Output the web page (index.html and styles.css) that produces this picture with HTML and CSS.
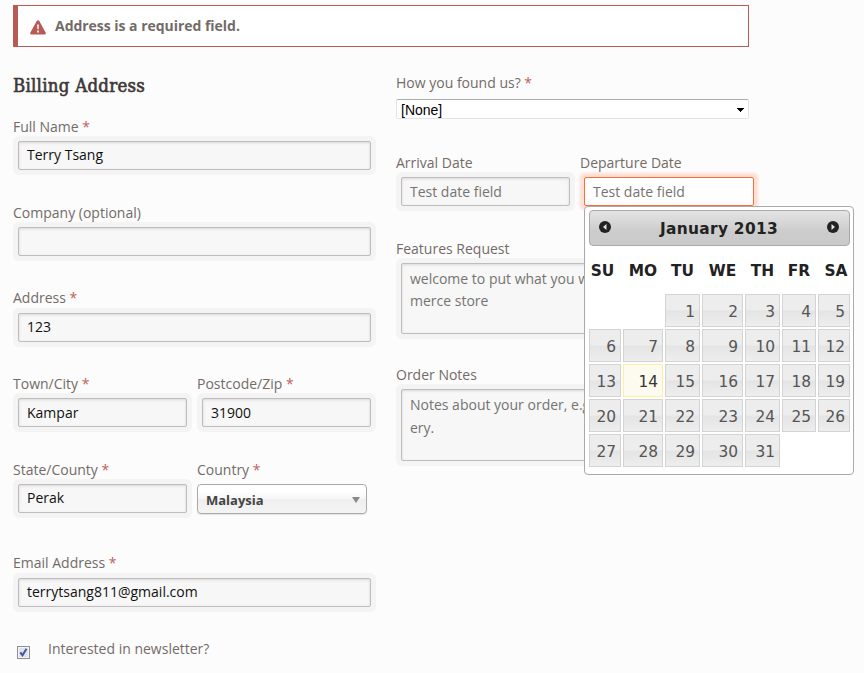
FILE: index.html
```html
<!DOCTYPE html>
<html lang="en">
<head>
<meta charset="utf-8">
<title>Billing Address</title>
<link rel="stylesheet" href="styles.css">
</head>
<body>
<main class="checkout">
  <div class="alert">
    <svg class="alert-icon" width="16" height="15" viewBox="0 0 16 15"><path d="M8 0.3c.6 0 1 .3 1.3.8l6.3 11.3c.6 1.2 0 2.2-1.2 2.2H1.6C.4 14.600-.2 13.600.4 12.400L6.700 1.100C7 .6 7.400.3 8 .3z" fill="#b85b55"/><path d="M7 4.500h2l-.3 4.800H7.300zM7 10.600h2v2H7z" fill="#f4e4e2"/></svg>
    <strong>Address is a required field.</strong>
  </div>
  <div class="columns">
    <form class="billing">
      <h3><span class="heading">Billing Address</span></h3>
      <div class="row"><label>Full Name <b>*</b></label><div class="field">Terry Tsang</div></div>
      <div class="row"><label>Company (optional)</label><div class="field"></div></div>
      <div class="row raised"><label>Address <b>*</b></label><div class="field">123</div></div>
      <div class="pair towns">
        <div class="row"><label>Town/City <b>*</b></label><div class="field">Kampar</div></div>
        <div class="row"><label>Postcode/Zip <b>*</b></label><div class="field">31900</div></div>
      </div>
      <div class="pair last">
        <div class="row"><label>State/County <b>*</b></label><div class="field">Perak</div></div>
        <div class="row"><label>Country <b>*</b></label><div class="chosen"><span>Malaysia</span><i></i></div></div>
      </div>
      <div class="row raised"><label>Email Address <b>*</b></label><div class="field">terrytsang811@gmail.com</div></div>
      <div class="check">
        <span class="box"><svg width="9" height="9" viewBox="0 0 9 9"><path d="M1.300 4.300L3.500 7.300 7.500.8" fill="none" stroke="#4057a0" stroke-width="2"/></svg></span>
        <label>Interested in newsletter?</label>
      </div>
    </form>
    <form class="extra">
      <label>How you found us? <b>*</b></label>
      <div class="select"><span>[None]</span><svg width="7" height="4" viewBox="0 0 7 4" shape-rendering="crispEdges"><path d="M0 0h7v1H6v1H5v1H4v1H3V3H2V2H1V1H0z"/></svg></div>
      <div class="pair dates">
        <div class="row"><label>Arrival Date</label><div class="field hint">Test date field</div></div>
        <div class="row depart"><label>Departure Date</label><div class="field hint focus">Test date field</div>
          <div class="picker">
            <div class="picker-head">
              <svg width="12" height="12" viewBox="0 0 12 12"><circle cx="6" cy="6" r="6" fill="#222"/><path d="M7.500 3v6L4 6z" fill="#e4e4e4"/></svg>
              <span>January 2013</span>
              <svg width="12" height="12" viewBox="0 0 12 12"><circle cx="6" cy="6" r="6" fill="#222"/><path d="M4.500 3v6L8 6z" fill="#e4e4e4"/></svg>
            </div>
            <div class="days names"><span>SU</span><span>MO</span><span>TU</span><span>WE</span><span>TH</span><span>FR</span><span>SA</span></div>
            <div class="days">
              <i></i><i></i><a>1</a><a>2</a><a>3</a><a>4</a><a>5</a>
              <a>6</a><a>7</a><a>8</a><a>9</a><a>10</a><a>11</a><a>12</a>
              <a>13</a><a class="today">14</a><a>15</a><a>16</a><a>17</a><a>18</a><a>19</a>
              <a>20</a><a>21</a><a>22</a><a>23</a><a>24</a><a>25</a><a>26</a>
              <a>27</a><a>28</a><a>29</a><a>30</a><a>31</a>
            </div>
          </div>
        </div>
      </div>
      <div class="note"><label>Features Request</label><div class="field area hint">welcome to put what you w<br>merce store</div></div>
      <div class="note order"><label>Order Notes</label><div class="field area hint">Notes about your order, e.g<br>ery.</div></div>
    </form>
  </div>
</main>
</body>
</html>
```
FILE: styles.css
```css
* { box-sizing: border-box; }
body {
  margin: 0;
  height: 673px;
  overflow: hidden;
  background: #fcfcfc;
  color: #736b68;
  font: 14px/22px "Open Sans", sans-serif;
}
.checkout { width: 736px; margin: 5px 0 0 13px; }
.alert {
  display: flex;
  align-items: center;
  gap: 9px;
  height: 42px;
  padding-left: 12px;
  border: 1px solid #b85b55;
  border-left-width: 5px;
  background: #fff;
}
.alert strong { letter-spacing: -0.03px; }
.alert-icon { margin-top: 2px; }
.columns { display: flex; gap: 21px; }
.billing { width: 362px; padding-top: 26px; }
h3 {
  margin: 0 0 17px;
  height: 26px;
  color: #3c3735;
  font: 400 18.5px/26px "DejaVu Serif Condensed", "DejaVu Serif", serif;
  font-stretch: condensed;
  white-space: nowrap;
}
.heading { letter-spacing: 0.25px; -webkit-text-stroke: 0.6px #3c3735; }
label { display: block; height: 22px; white-space: nowrap; }
label b { color: #c0605a; font-weight: 400; }
.row { height: 85.75px; }
.field {
  height: 29px;
  margin: 3px 4px 0 5px;
  padding: 0 8px;
  border: 1px solid #c0bbbc;
  border-radius: 2px;
  background: #f7f7f7;
  box-shadow: 0 0 0 5px #f4f4f4, inset 0 1px 3px rgba(0, 0, 0, .12);
  color: #111;
  line-height: 26px;
  white-space: nowrap;
}
.raised { display: flow-root; }
.raised label { margin-top: -1px; }
.raised .field { margin-top: 4px; }
.hint { color: #757371; }
.pair { display: grid; grid-template-columns: 178px 178px; gap: 6px; }
.towns .field, .dates .field { line-height: 28px; }
.last { height: 94px; }
.chosen {
  display: flex;
  align-items: center;
  justify-content: space-between;
  width: 170px;
  height: 30px;
  margin-top: 3px;
  padding: 2px 6px 0 8px;
  border: 1px solid #aaa;
  border-radius: 4px;
  background: linear-gradient(#fff 20%, #f6f6f6 50%, #eee 52%, #f4f4f4);
  box-shadow: 0 1px 1px rgba(0, 0, 0, .1);
  color: #444;
  font-size: 13px;
  font-weight: 700;
}
.chosen i { border: 4px solid transparent; border-top: 6px solid #888; border-bottom: 0; }
.check { display: flex; gap: 18px; padding-left: 4px; margin-top: -1px; }
.box {
  display: grid;
  place-items: center;
  width: 13px;
  height: 13px;
  margin-top: 8px;
  border: 1px solid #8e8f8f;
  background: #dfe3ea;
  box-shadow: inset 0 0 0 1px #f4f4f4;
}
.extra { width: 358px; flex: none; padding-top: 25px; }
.select {
  display: flex;
  align-items: center;
  justify-content: space-between;
  width: 353px;
  height: 20px;
  margin-top: 5px;
  padding: 1px 4px 0;
  border: 1px solid #e2e3ea;
  border-top-color: #abadb3;
  border-radius: 2px;
  background: #fff;
  color: #000;
  font: 14px/18px "Liberation Sans", sans-serif;
}
.dates { margin-top: 33px; grid-template-columns: 178px 179px; }
.dates .field { margin-right: 4px; }
.depart { position: relative; }
.depart .field {
  margin: 3px 5px 0 4px;
  border-color: #ff6b3a;
  background: #fff;
  box-shadow: 0 0 0 3px #ffe0d7, 0 0 1px 4.5px #ffeae4;
}
.note { height: 126.5px; }
.area { height: 71px; padding-top: 4px; line-height: 22.5px; }
.order .area { height: 72px; }
.picker {
  position: absolute;
  top: 54px;
  left: 4px;
  width: 270px;
  height: 269px;
  padding: 3px 3px 0 4px;
  border: 1px solid #aaa;
  border-radius: 4px;
  background: #fff;
  color: #222;
  font: 15.4px/33px "DejaVu Sans", sans-serif;
}
.picker-head {
  display: flex;
  justify-content: space-between;
  width: 261px;
  height: 36px;
  padding: 0 10px 0 9px;
  border: 1px solid #aaa;
  border-radius: 4px;
  background: linear-gradient(#e4e4e4, #ccc 60%, #cacaca);
  font-weight: 700;
  line-height: 37px;
  letter-spacing: 0.3px;
}
.picker-head svg { margin-top: 10px; }
.days {
  display: grid;
  grid-template-columns: 32px 40px 35px 41px 35px 34px 32px;
  grid-auto-rows: 33px;
  gap: 2px;
}
.names { margin: 9px 0 6px; font-weight: 700; }
.names span { display: flex; justify-content: center; }
.names span:first-child { margin-left: -5px; }
.names span:last-child { margin-right: -4px; }
.days a {
  padding-right: 4px;
  border: 1px solid #d3d3d3;
  background: linear-gradient(#ededed 48%, #e4e4e4 52%, #eee);
  color: #555;
  text-align: right;
  line-height: 34px;
}
.days .today { border-color: #fcefa1; background: #fdfbf0; color: #363636; }
```
